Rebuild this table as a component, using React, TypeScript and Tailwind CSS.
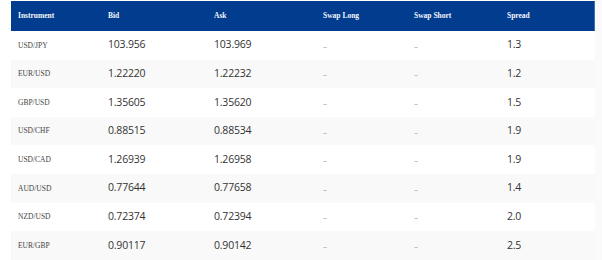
const rows = [
  { pair: "USD/JPY", bid: "103.956", ask: "103.969", spread: "1.3" },
  { pair: "EUR/USD", bid: "1.22220", ask: "1.22232", spread: "1.2" },
  { pair: "GBP/USD", bid: "1.35605", ask: "1.35620", spread: "1.5" },
  { pair: "USD/CHF", bid: "0.88515", ask: "0.88534", spread: "1.9" },
  { pair: "USD/CAD", bid: "1.26939", ask: "1.26958", spread: "1.9" },
  { pair: "AUD/USD", bid: "0.77644", ask: "0.77658", spread: "1.4" },
  { pair: "NZD/USD", bid: "0.72374", ask: "0.72394", spread: "2.0" },
  { pair: "EUR/GBP", bid: "0.90117", ask: "0.90142", spread: "2.5" },
];

const cols = "grid grid-cols-[90px_106px_109px_91px_93px_95px]";
const serif = "font-['Liberation_Serif',serif]";
const sans = "font-['Open_Sans',sans-serif]";

export default function App() {
  return (
    <div className="w-[602px] h-[260px] bg-white flex overflow-hidden">
      <div className="ml-[11px] w-[584px] pt-[1px]">
        <div className={`${cols} h-[30px] items-center bg-[#023c8e] border-r border-[#3f6db0] text-[#f4f6fb] text-[7.5px] font-bold ${serif}`}>
          <div className="pl-[7px]">Instrument</div>
          <div className="pl-[7px]">Bid</div>
          <div className="pl-[7px]">Ask</div>
          <div className="pl-[7px]">Swap Long</div>
          <div className="pl-[7px]">Swap Short</div>
          <div className="pl-[7px]">Spread</div>
        </div>
        {rows.map((r, i) => (
          <div
            key={r.pair}
            className={`${cols} h-[28.6px] items-center ${i % 2 === 1 ? "bg-[#f9f9f9]" : "bg-white"}`}
          >
            <div className={`pl-[7px] text-[7.5px] text-[#444] ${serif}`}>{r.pair}</div>
            <div className={`pl-[7px] text-[10.5px] tracking-[-0.2px] text-[#333] ${sans}`}>{r.bid}</div>
            <div className={`pl-[7px] text-[10.5px] tracking-[-0.2px] text-[#333] ${sans}`}>{r.ask}</div>
            <div className={`pl-[7px] pt-[1px] text-[8px] text-[#999] ${sans}`}>–</div>
            <div className={`pl-[7px] pt-[1px] text-[8px] text-[#999] ${sans}`}>–</div>
            <div className={`pl-[7px] text-[10.5px] tracking-[-0.2px] text-[#333] ${sans}`}>{r.spread}</div>
          </div>
        ))}
      </div>
      <div className="flex-1 bg-[#fafafa]" />
    </div>
  );
}
